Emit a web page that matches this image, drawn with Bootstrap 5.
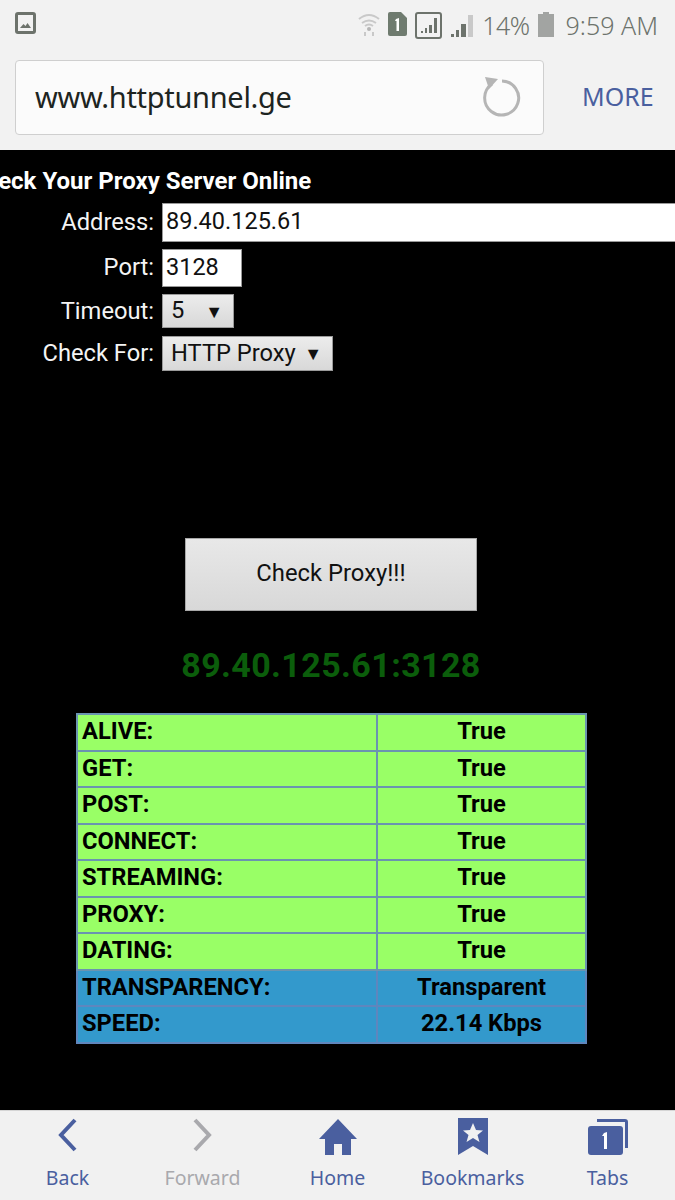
<!DOCTYPE html>
<html lang="en">
<head>
    <meta charset="UTF-8">
    <meta name="viewport" content="width=device-width, initial-scale=1.0">
    <title>Check Your Proxy Server Online</title>
    <link href="https://cdn.jsdelivr.net/npm/bootstrap@5.3.0/dist/css/bootstrap.min.css" rel="stylesheet">
    <style>
        html, body { height: 100%; }
        body {
            background-color: #000;
            font-family: Roboto, "Liberation Sans", sans-serif;
            overflow: hidden;
        }
        .phone-page { width: 675px; height: 1200px; overflow: hidden; }
        .top-chrome { height: 150px; background-color: #f2f2f2; }
        .status-row { height: 60px; padding: 12px 17px 0 15px; color: #6d736c; }
        .status-text { font-family: "Noto Sans", sans-serif; font-size: 25px; line-height: 26px; letter-spacing: -0.5px; font-weight: 300; }
        .status-time { letter-spacing: 0; }
        .url-row { height: 74px; padding-left: 15px; }
        .url-box {
            width: 529px; height: 75px; background-color: #fbfbfb;
            border: 1px solid #cfcfcf; border-radius: 4px; padding: 0 22px 0 19px;
        }
        .url-text { font-family: "Noto Sans", sans-serif; font-size: 29px; color: #1d2421; letter-spacing: -0.3px; }
        .more-link { margin-left: 38px; font-family: "Noto Sans", sans-serif; font-size: 25px; color: #4a5f9f; }

        .proxy-area { height: 960px; background-color: #000; color: #fff; }
        .proxy-title { margin: 17px 0 0 -31px; font-size: 24px; line-height: 28px; font-weight: 700; white-space: nowrap; }
        .form-line { column-gap: 7px; }
        .form-line label { flex: 0 0 155px; padding-right: 1px; text-align: right; font-size: 23.7px; line-height: 28px; color: #f4f4f4; }
        .line-address { margin-top: 8px; height: 39px; }
        .line-address label { padding-bottom: 2px; }
        .line-port { margin-top: 7px; height: 38px; }
        .line-port label { padding-bottom: 2px; }
        .line-timeout { margin-top: 7px; height: 34px; }
        .line-check { margin-top: 8px; height: 35px; }
        .line-check label { padding-bottom: 2px; }
        .text-field {
            height: 100%; padding: 0 3px; background-color: #fff; color: #111;
            font-size: 23.5px; line-height: 34px; border: 1px solid #999; border-width: 1px 0 1px 1px;
        }
        .field-address { flex: 0 0 520px; }
        .field-port { width: 80px; border-width: 1px; }
        .fake-select {
            height: 100%; padding: 0 10px 0 8px; color: #111; font-size: 23.7px;
            background: linear-gradient(#ececec, #d8d8d8); border: 1px solid #9a9a9a;
        }
        .select-timeout { width: 72px; }
        .select-check { width: 171px; }
        .select-arrow { font-size: 18px; }
        .check-btn {
            display: block; width: 292px; height: 73px; margin: 167px 0 0 185px; padding-bottom: 2px;
            background: linear-gradient(#e8e8e8, #d8d8d8); border: 1px solid #a8a8a8;
            color: #111; font-size: 23.8px;
        }
        .proxy-ip { margin-top: 34px; padding-right: 13px; height: 40px; text-align: center; color: #0b5d0b; font-size: 34px; line-height: 40px; font-weight: 700; letter-spacing: 0.4px; }
        .result-wrap { margin: 28px 0 0 76px; }
        .result-table { width: 511px; table-layout: fixed; font-size: 23.7px; font-weight: 700; color: #000; }
        .result-table td { height: 36.5px; padding: 0 4px 2px; border: 2px solid #6a94b0; line-height: 30px; }
        .result-table td:first-child { width: 300px; }
        .result-table td:last-child { text-align: center; }
        .state-ok td { background-color: #99ff66; }
        .state-info td { background-color: #3399cc; border-color: #5f86bd; }

        .bottom-bar { height: 90px; background-color: #f1f1f1; border-top: 1px solid #d5d5d5; }
        .bar-item { width: 135px; color: #4a5f9f; font-family: "Noto Sans", sans-serif; font-size: 19.5px; line-height: 26px; }
        .bar-item svg { display: block; height: 40px; margin-top: 6px; margin-bottom: 8px; }
        .bar-item.is-off { color: #a9a9ad; }
    </style>
</head>
<body>
    <div class="phone-page d-flex flex-column">
        <!-- Browser top -->
        <div class="top-chrome">
            <div class="status-row d-flex align-items-start">
                <svg width="21" height="22" viewBox="0 0 21 22"><rect x="1.5" y="1.5" width="18" height="19" rx="1.5" fill="none" stroke="#6d736c" stroke-width="3"/><path d="M5 16l3.500-4 2 2 2-3 3.500 5z" fill="#6d736c"/></svg>
                <div class="ms-auto d-flex align-items-start">
                    <svg width="22" height="24" viewBox="0 0 22 24" class="me-2"><path d="M1 7q10-8 20 0M4 11q7-5 14 0M7 14q4-3 8 0" fill="none" stroke="#c9c9c9" stroke-width="2"/><circle cx="11" cy="17" r="2" fill="#b5b5b5"/><path d="M7 24v-4M15 24v-4" stroke="#c9c9c9" stroke-width="2"/></svg>
                    <svg width="19" height="24" viewBox="0 0 19 24" class="me-2"><path d="M0 2q0-2 2-2h11l6 6v16q0 2-2 2H2q-2 0-2-2z" fill="#6f7b6f"/><path d="M8 7l3-1v13H8.500V9H7z" fill="#fff"/></svg>
                    <svg width="27" height="27" viewBox="0 0 27 27" class="me-2"><rect x="1" y="1" width="25" height="25" rx="2" fill="none" stroke="#6d736c" stroke-width="2"/><path d="M6 21v-2h2v2zM10 21v-5h2v5zM14 21v-8h3v8zM19 21V6h3v15z" fill="#6d736c"/></svg>
                    <svg width="24" height="26" viewBox="0 0 24 26" class="me-2"><path d="M1 25v-3h3v3zM6 25v-7h3v7zM11 25V12h5v13z" fill="#6d736c"/><path d="M18 25V3h5v22z" fill="#c9c9c9"/></svg>
                    <span class="status-text me-1">14%</span>
                    <svg width="16" height="25" viewBox="0 0 16 25" class="mx-1"><path d="M5 0h6v2h5v23H0V2h5z" fill="#a2a4a2"/></svg>
                    <span class="status-text status-time ms-2">9:59 AM</span>
                </div>
            </div>
            <div class="url-row d-flex align-items-center">
                <div class="url-box d-flex align-items-center justify-content-between">
                    <span class="url-text">www.httptunnel.ge</span>
                    <svg width="40" height="42" viewBox="0 0 40 42"><path d="M11 8a17 17 0 1 0 10-3" fill="none" stroke="#b5b5b5" stroke-width="3"/><path d="M4 1l13 2-9 10z" fill="#b5b5b5"/></svg>
                </div>
                <span class="more-link">MORE</span>
            </div>
        </div>

        <!-- Proxy form -->
        <div class="proxy-area">
            <div class="proxy-title">Check Your Proxy Server Online</div>
            <div class="form-line line-address d-flex align-items-center">
                <label>Address:</label>
                <div class="text-field field-address">89.40.125.61</div>
            </div>
            <div class="form-line line-port d-flex align-items-center">
                <label>Port:</label>
                <div class="text-field field-port">3128</div>
            </div>
            <div class="form-line line-timeout d-flex align-items-center">
                <label>Timeout:</label>
                <div class="fake-select select-timeout d-flex align-items-center justify-content-between"><span>5</span><span class="select-arrow">▼</span></div>
            </div>
            <div class="form-line line-check d-flex align-items-center">
                <label>Check For:</label>
                <div class="fake-select select-check d-flex align-items-center justify-content-between"><span>HTTP Proxy</span><span class="select-arrow">▼</span></div>
            </div>
            <button type="button" class="check-btn">Check Proxy!!!</button>
            <div class="proxy-ip">89.40.125.61:3128</div>
            <div class="result-wrap">
                <table class="result-table">
                    <tr class="state-ok"><td>ALIVE:</td><td>True</td></tr>
                    <tr class="state-ok"><td>GET:</td><td>True</td></tr>
                    <tr class="state-ok"><td>POST:</td><td>True</td></tr>
                    <tr class="state-ok"><td>CONNECT:</td><td>True</td></tr>
                    <tr class="state-ok"><td>STREAMING:</td><td>True</td></tr>
                    <tr class="state-ok"><td>PROXY:</td><td>True</td></tr>
                    <tr class="state-ok"><td>DATING:</td><td>True</td></tr>
                    <tr class="state-info"><td>TRANSPARENCY:</td><td>Transparent</td></tr>
                    <tr class="state-info"><td>SPEED:</td><td>22.14 Kbps</td></tr>
                </table>
            </div>
        </div>

        <!-- Browser bottom -->
        <div class="bottom-bar d-flex">
            <div class="bar-item d-flex flex-column align-items-center">
                <svg width="24" height="40" viewBox="0 0 24 40"><path d="M19 3L5 18l14 15" fill="none" stroke="#4a5f9f" stroke-width="4"/></svg>
                <span>Back</span>
            </div>
            <div class="bar-item is-off d-flex flex-column align-items-center">
                <svg width="24" height="40" viewBox="0 0 24 40"><path d="M4 3l14 15L4 33" fill="none" stroke="#a9a9ad" stroke-width="4"/></svg>
                <span>Forward</span>
            </div>
            <div class="bar-item d-flex flex-column align-items-center">
                <svg width="40" height="40" viewBox="0 0 40 40"><path d="M20 2L39 22h-6v16H24V27h-8v11H7V22H1z" fill="#4a5f9f"/></svg>
                <span>Home</span>
            </div>
            <div class="bar-item d-flex flex-column align-items-center">
                <svg width="32" height="40" viewBox="0 0 32 40"><path fill-rule="evenodd" d="M1 1h30v37L16 29 1 38zM16 6l-3 7-7 .5 5.500 4.500-2 7 6.500-4 6.500 4-2-7 5.500-4.500-7-.5z" fill="#4a5f9f"/></svg>
                <span>Bookmarks</span>
            </div>
            <div class="bar-item d-flex flex-column align-items-center">
                <svg width="42" height="40" viewBox="0 0 42 40"><path d="M10 2h28q3 0 3 3v26h-3V5H10z" fill="#4a5f9f"/><rect x="1" y="9" width="35" height="29" rx="3" fill="#4a5f9f"/><path d="M17 16l3-1v17h-3V19h-2z" fill="#fff"/></svg>
                <span>Tabs</span>
            </div>
        </div>
    </div>
    <script src="https://cdn.jsdelivr.net/npm/bootstrap@5.3.0/dist/js/bootstrap.bundle.min.js"></script>
</body>
</html>
